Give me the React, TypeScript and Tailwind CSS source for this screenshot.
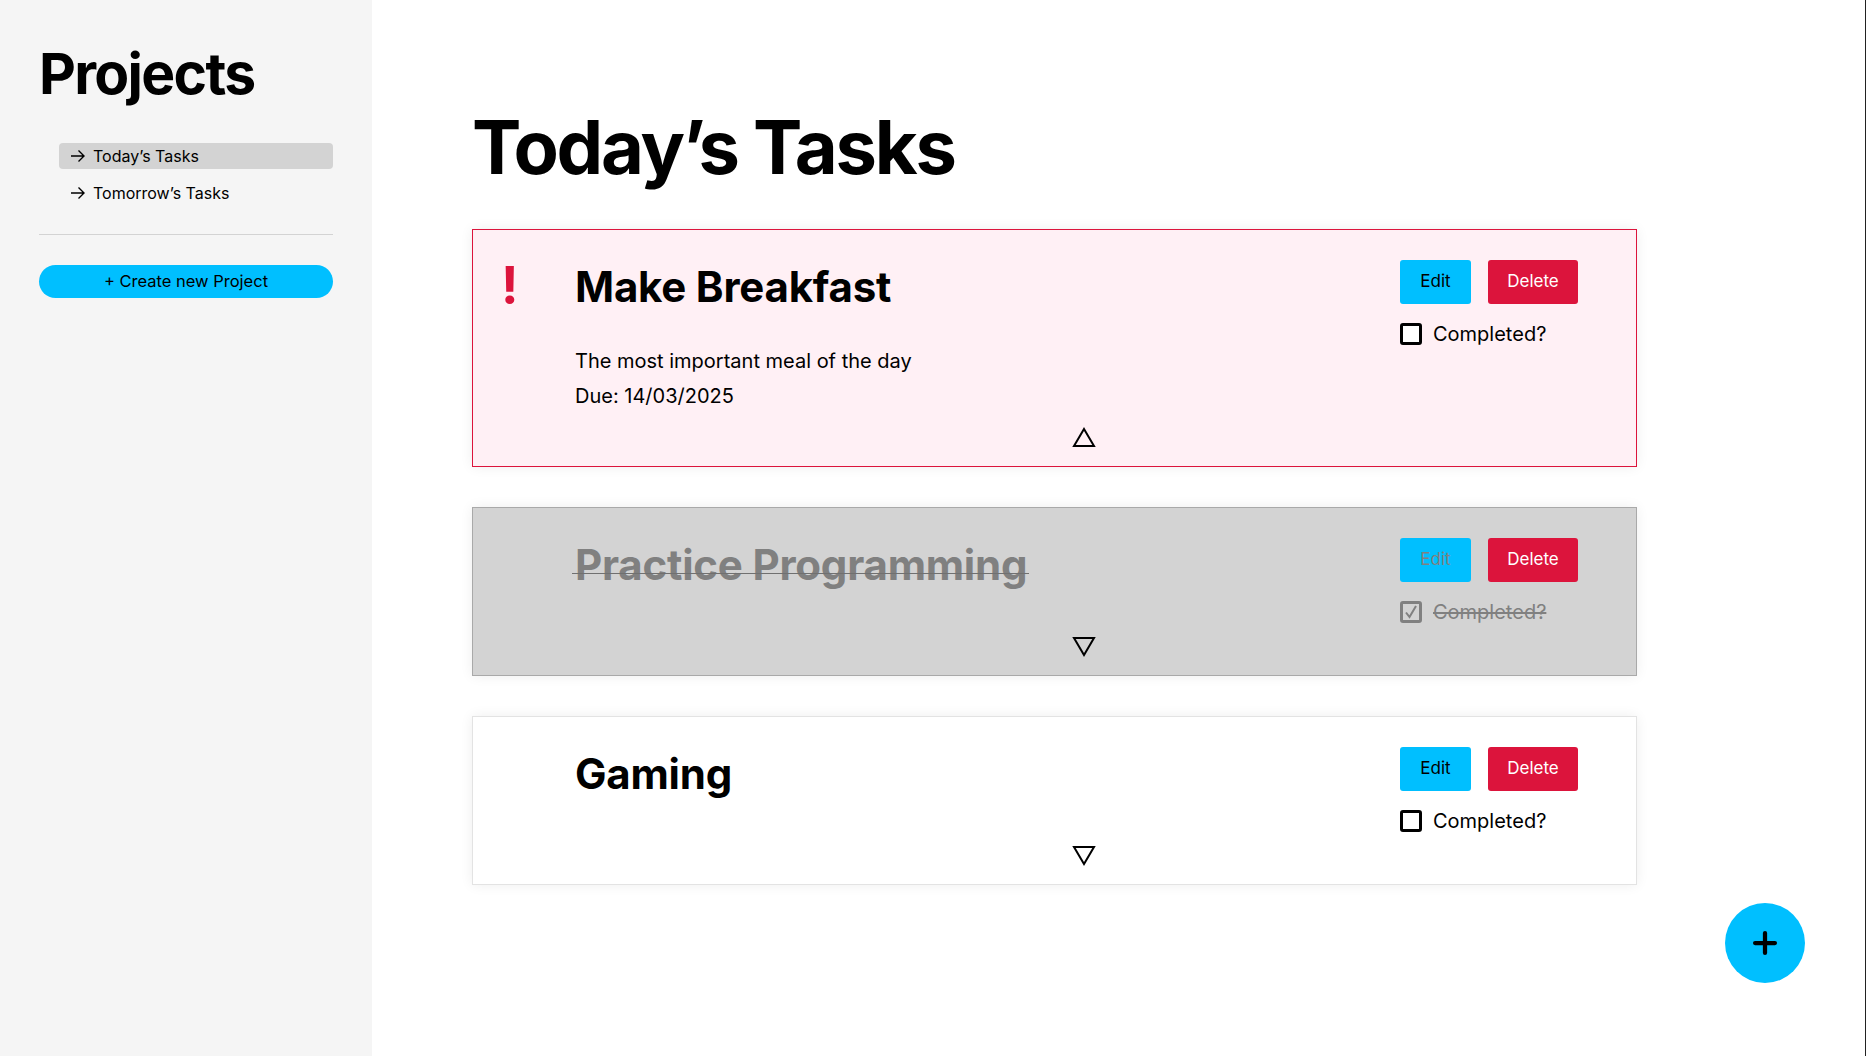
import { Plus } from "lucide-react";

type Task = {
  title: string;
  description?: string;
  due?: string;
  important?: boolean;
  completed?: boolean;
  expanded?: boolean;
};

const tasks: Task[] = [
  {
    title: "Make Breakfast",
    description: "The most important meal of the day",
    due: "14/03/2025",
    important: true,
    expanded: true,
  },
  { title: "Practice Programming", completed: true },
  { title: "Gaming" },
];

function Arrow() {
  return (
    <svg width="16" height="14" viewBox="0 0 16 14" fill="none" stroke="currentColor" strokeWidth="1.4" className="shrink-0">
      <path d="M1 7h13M8.5 1.5 14 7l-5.5 5.5" />
    </svg>
  );
}

function Triangle({ up }: { up?: boolean }) {
  return (
    <svg width="24" height="21" viewBox="0 0 24 21" fill="none" stroke="black" strokeWidth="2">
      {up ? <path d="M12 2 22 19H2Z" /> : <path d="M2 2h20L12 19Z" />}
    </svg>
  );
}

function Checkbox({ checked }: { checked?: boolean }) {
  if (checked) {
    return (
      <span className="flex h-[22px] w-[22px] shrink-0 items-center justify-center rounded-[3px] border-[3px] border-[#808080]">
        <svg width="14" height="14" viewBox="0 0 14 14" fill="none" stroke="#808080" strokeWidth="2">
          <path d="M2 7.5 5.5 12 12 1" />
        </svg>
      </span>
    );
  }
  return <span className="h-[22px] w-[22px] shrink-0 rounded-[3px] border-[3px] border-black bg-white" />;
}

function TaskCard({ task }: { task: Task }) {
  const done = task.completed;
  const cardClass = task.important
    ? "border-[#dc143c] bg-[#fff0f5]"
    : done
      ? "border-[#a9a9a9] bg-[#d3d3d3]"
      : "border-[#e3e3e3] bg-white";

  return (
    <div className={`flex flex-col border pt-[30px] pb-[18px] shadow-[0_0_12px_rgba(0,0,0,0.07)] ${cardClass}`}>
      <div className="flex items-start">
        <div className="w-[102px] shrink-0 pl-[28px]">
          {task.important && <span className="block text-[52px] font-bold leading-none text-[#dc143c]">!</span>}
        </div>
        <div className="flex-1 pt-[6px]">
          <h2 className={`text-[42px] font-bold leading-none tracking-[-0.005em] ${done ? "text-[#808080]" : "text-black"}`}>
            {done ? (
              <span className="relative inline-block">
                {task.title}
                <span className="absolute top-[29px] -right-[2px] -left-[3px] h-px bg-[#707070]" />
              </span>
            ) : (
              task.title
            )}
          </h2>
          {task.expanded && (
            <div className="mt-[36px] text-[20px] leading-[35px] text-black">
              <p>{task.description}</p>
              <p>Due: {task.due}</p>
            </div>
          )}
        </div>
        <div className="mr-[58px] flex flex-col items-start gap-[19px]">
          <div className="flex gap-[17px]">
            <button className={`h-[44px] w-[71px] rounded-[3px] bg-[#00bfff] text-[17px] ${done ? "text-[#808080]" : "text-black"}`}>
              Edit
            </button>
            <button className="h-[44px] w-[90px] rounded-[3px] bg-[#dc143c] text-[17px] text-white">Delete</button>
          </div>
          <label className="flex items-center gap-[11px]">
            <Checkbox checked={done} />
            <span className={`text-[20px] leading-[22px] ${done ? "text-[#808080] line-through" : "text-black"}`}>Completed?</span>
          </label>
        </div>
      </div>
      <div className="mt-[13px] flex justify-center pl-[88px] pr-[30px]">
        <Triangle up={task.expanded} />
      </div>
    </div>
  );
}

export default function App() {
  return (
    <div className="relative flex h-[1056px] w-full border-r border-[#222] bg-white font-['Inter',sans-serif] text-black">
      <aside className="flex w-[372px] shrink-0 flex-col bg-[#f5f5f5] px-[39px] pt-[45px]">
        <h1 className="text-[57px] font-bold leading-none tracking-[-0.03em]">Projects</h1>

        <nav className="mt-[41px] ml-[20px] flex flex-col gap-[11px]">
          <a className="flex h-[26px] items-center gap-[7px] rounded-[4px] bg-[#d3d3d3] pl-[11px] text-[16px]">
            <Arrow />
            Today’s Tasks
          </a>
          <a className="flex h-[26px] items-center gap-[7px] pl-[11px] text-[16px]">
            <Arrow />
            Tomorrow’s Tasks
          </a>
        </nav>

        <hr className="mt-[28px] border-t border-[#d3d3d3]" />

        <button className="mt-[30px] h-[33px] w-full rounded-full bg-[#00bfff] text-[16.5px]">+ Create new Project</button>
      </aside>

      <main className="flex-1 pl-[100px] pt-[110px]">
        <h1 className="text-[74px] font-bold leading-none tracking-[-0.03em]">Today’s Tasks</h1>
        <div className="mt-[45px] flex w-[1165px] flex-col gap-[40px]">
          {tasks.map((task) => (
            <TaskCard key={task.title} task={task} />
          ))}
        </div>
      </main>

      <button className="absolute right-[60px] bottom-[73px] flex h-[80px] w-[80px] items-center justify-center rounded-full bg-[#00bfff]">
        <Plus size={34} strokeWidth={3} color="black" />
      </button>
    </div>
  );
}
